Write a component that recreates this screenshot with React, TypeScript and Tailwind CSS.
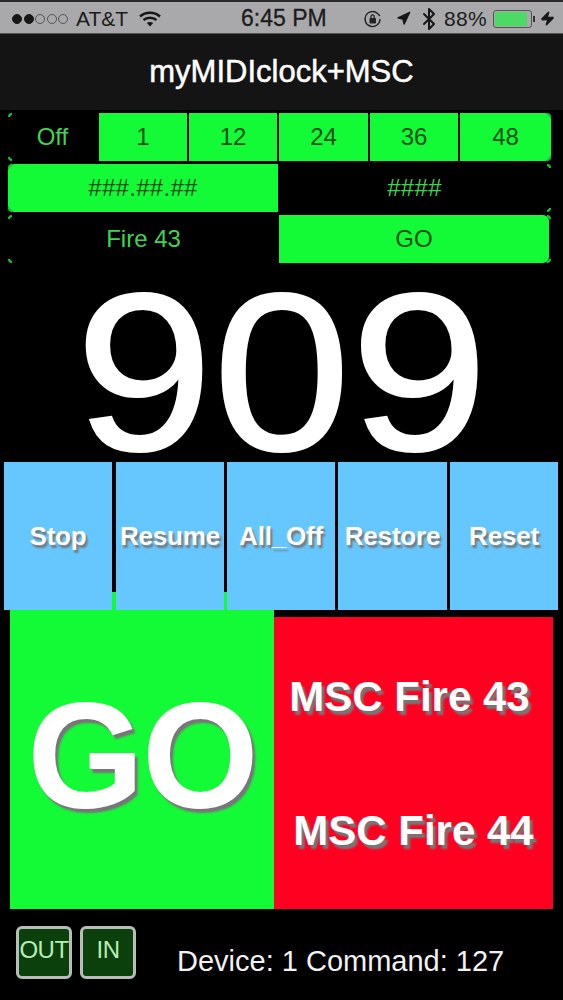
import React from 'react';
import { Navigation, Bluetooth, Zap } from 'lucide-react';

const GREEN = 'bg-[#12fb36]';

const Corners: React.FC = () => (
  <>
    <span className="absolute left-0 top-0 w-[4px] h-[4px] border-l-2 border-t-2 border-[#12c832] rounded-tl" />
    <span className="absolute right-0 top-0 w-[4px] h-[4px] border-r-2 border-t-2 border-[#12c832] rounded-tr" />
    <span className="absolute left-0 bottom-0 w-[4px] h-[4px] border-l-2 border-b-2 border-[#12c832] rounded-bl" />
    <span className="absolute right-0 bottom-0 w-[4px] h-[4px] border-r-2 border-b-2 border-[#12c832] rounded-br" />
  </>
);

const Dots: React.FC = () => (
  <div className="flex gap-[1.5px] items-center">
    {[true, true, false, false, false].map((filled, index) => (
      <span
        key={index}
        className={filled ? 'w-[10px] h-[10px] rounded-full bg-[#161616] border border-[#161616]' : 'w-[10px] h-[10px] rounded-full border border-[#555]'}
      />
    ))}
  </div>
);

const StatusBar: React.FC = () => (
  <div className="h-[34px] shrink-0 bg-[#a9a8aa] border-t-2 border-t-[#2a2a2a] border-b border-b-[#555] flex items-center pl-3 pr-2 pt-[2px] text-[#1c1c1c] text-[21px] relative">
    <Dots />
    <span className="ml-[8px]">AT&amp;T</span>
    <svg className="ml-[11px]" width="22" height="16" viewBox="0 0 22 16" fill="none" stroke="#161616" strokeWidth="2.4" strokeLinecap="butt">
      <path d="M1 5.5C6.5 0.5 15.5 0.5 21 5.5" />
      <path d="M4.5 9C8 6 14 6 17.5 9" />
      <path d="M11 15.5L7.8 12C9.7 10.5 12.3 10.5 14.2 12Z" fill="#161616" stroke="none" />
    </svg>
    <span className="absolute left-[241px] text-[23px] [-webkit-text-stroke:0.3px_#1c1c1c]">6:45 PM</span>
    <div className="ml-auto flex items-center">
      <svg width="20" height="20" viewBox="0 0 20 20" fill="none" stroke="#222" strokeWidth="1.3">
        <path d="M17 10a7.5 7.5 0 1 1-2.2-5.3L17 7" />
        <rect x="6.5" y="9" width="6.5" height="5.5" rx="1" fill="#222" stroke="none" />
        <path d="M8 9V7.5a1.6 1.6 0 0 1 3.2 0V9" />
      </svg>
      <Navigation size={15} className="ml-[13px]" fill="#161616" color="#161616" />
      <Bluetooth size={24} className="ml-[6px]" color="#161616" strokeWidth={2} />
      <span className="ml-[3px] tracking-[0.3px]">88%</span>
      <div className="ml-[6px] w-[39px] h-[18px] rounded-[3px] border border-[#555] p-[1px]">
        <div className="h-full w-[92%] bg-[#4cd964] rounded-[1px]" />
      </div>
      <span className="w-[2px] h-[6px] bg-[#333] ml-[1px]" />
      <Zap size={15} className="ml-[5px]" fill="#161616" color="#161616" />
    </div>
  </div>
);

const Seg: React.FC<{ label: string; on?: boolean; className?: string }> = ({ label, on, className }) => (
  <div
    className={
      (on ? GREEN + ' text-[#0d4f1a] ' : 'text-[#3fd452] ') +
      'flex items-center justify-center text-[24px] ' +
      (className || '')
    }
  >
    {label}
  </div>
);

const ActionButton: React.FC<{ label: string; className: string }> = ({ label, className }) => (
  <div className={'h-full bg-[#66c7ff] flex items-center justify-center text-white font-bold text-[26px] tracking-[-0.2px] [text-shadow:2px_3px_2px_#777] ' + className}>
    {label}
  </div>
);

const LedBox: React.FC<{ label: string }> = ({ label }) => (
  <div className="w-[56px] h-[53px] bg-[#0b3f0c] border-[3px] border-[#b9bdb8] rounded-[6px] flex items-center justify-center text-[#b7eeb4] text-[24px] tracking-[-0.5px] pb-[5px]">
    {label}
  </div>
);

const App: React.FC = () => {
  return (
    <div className="w-[563px] h-[1000px] bg-black flex flex-col overflow-hidden font-['Liberation_Sans',Arial,sans-serif]">
      <StatusBar />
      <div className="h-[76px] shrink-0 bg-[#141414] flex items-center justify-center text-white text-[31px] [-webkit-text-stroke:0.5px_white]">
        myMIDIclock+MSC
      </div>

      <div className="mt-[3px] ml-[8px] w-[543px] h-[150px] flex flex-col gap-[3px]">
        <div className="relative flex h-[48px] gap-[2px]">
          <Corners />
          <Seg label="Off" className="w-[89px]" />
          <Seg label="1" on className="w-[88px]" />
          <Seg label="12" on className="w-[88px]" />
          <Seg label="24" on className="w-[89px]" />
          <Seg label="36" on className="w-[88px]" />
          <Seg label="48" on className="w-[91px] rounded-r-md" />
        </div>
        <div className="relative flex h-[48px]">
          <Corners />
          <Seg label="###.##.##" on className="w-[270px] rounded-l-md tracking-[0.3px]" />
          <Seg label="####" className="w-[273px] tracking-[0.3px]" />
        </div>
        <div className="relative flex h-[48px]">
          <Corners />
          <Seg label="Fire 43" className="w-[271px]" />
          <Seg label="GO" on className="w-[270px] rounded-r-md" />
        </div>
      </div>

      <div className="h-[199px] shrink-0 flex items-start justify-center pt-[19px]">
        <span className="block text-white text-[225px] leading-[180px] scale-x-[1.1] [-webkit-text-stroke:2px_white]">909</span>
      </div>

      <div className="h-[148px] shrink-0 flex relative pl-[4px]">
        <span className={'absolute left-[112px] bottom-0 w-[4px] h-[18px] ' + GREEN} />
        <span className={'absolute left-[224px] bottom-0 w-[3px] h-[18px] ' + GREEN} />
        <ActionButton label="Stop" className="w-[108px]" />
        <ActionButton label="Resume" className="w-[108px] ml-[4px]" />
        <ActionButton label="All_Off" className="w-[108px] ml-[3px]" />
        <ActionButton label="Restore" className="w-[109px] ml-[3px]" />
        <ActionButton label="Reset" className="w-[108px] ml-[3px]" />
      </div>

      <div className="h-[299px] shrink-0 flex pl-[10px]">
        <div className={'w-[264px] flex items-center justify-center text-white font-bold text-[150px] tracking-[-2px] [text-shadow:3px_4px_2px_#777] pb-[6px] ' + GREEN}>
          GO
        </div>
        <div className="w-[279px] mt-[7px] bg-[#ff0020] flex flex-col items-center text-white font-bold text-[42px] leading-[48px] [text-shadow:3px_4px_2px_#777]">
          <span className="mt-[56px] mr-[8px]">MSC Fire 43</span>
          <span className="mt-[86px]">MSC Fire 44</span>
        </div>
      </div>

      <div className="flex-1 flex items-start pl-[16px] pt-[17px]">
        <LedBox label="OUT" />
        <div className="ml-[8px]"><LedBox label="IN" /></div>
        <span className="ml-[41px] mt-[17px] text-[#f2f2f2] text-[29px] leading-[36px]">Device: 1 Command: 127</span>
      </div>
    </div>
  );
};

export default App;
